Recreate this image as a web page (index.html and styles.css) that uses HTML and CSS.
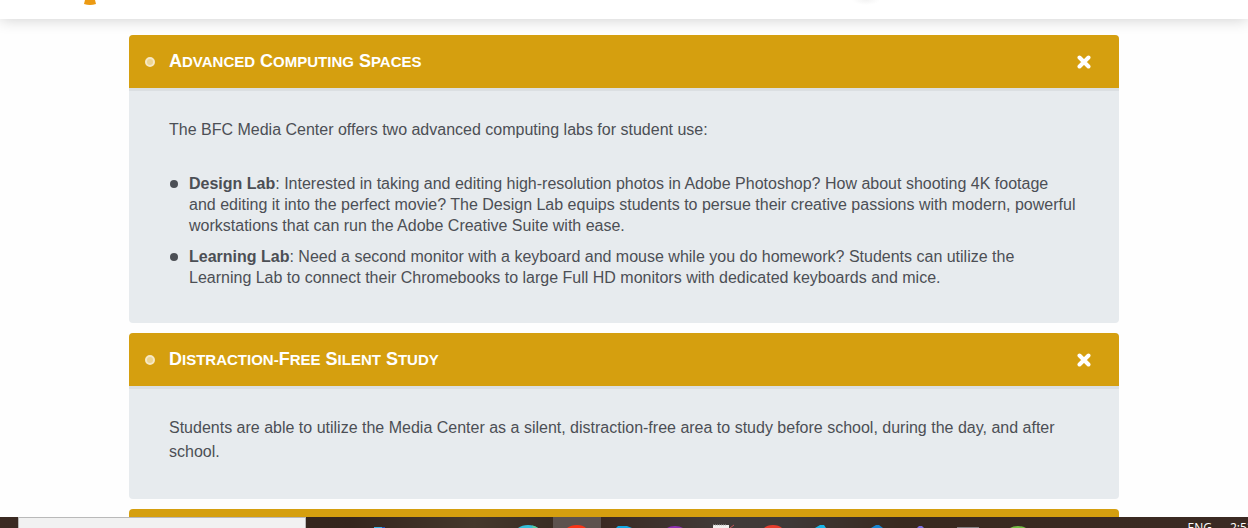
FILE: index.html
```html
<!DOCTYPE html>
<html lang="en">
<head>
<meta charset="utf-8">
<meta name="viewport" content="width=device-width, initial-scale=1">
<title>BFC Media Center</title>
<link rel="stylesheet" href="styles.css">
</head>
<body>
<header class="site-header">
  <svg class="logo" width="12" height="5" viewBox="0 0 12 5" aria-hidden="true"><path d="M1 0H11L12 4Q6 6 0 4Z" fill="#ec9a12"/></svg>
  <span class="header-glow"></span>
</header>

<main class="accordion">
  <section class="panel">
    <h2 class="panel-heading">
      <button class="panel-toggle" type="button" aria-expanded="true" aria-controls="computing">
        <span class="dot"></span>
        <span class="panel-title"><span class="word">Advanced</span> <span class="word">Computing</span> <span class="word">Spaces</span></span>
        <svg class="close" width="14" height="14" viewBox="0 0 14 14" aria-hidden="true"><path d="M2.500 2.500L11.500 11.500M11.500 2.500L2.500 11.500"/></svg>
      </button>
    </h2>
    <div class="panel-body" id="computing">
      <p class="text">The BFC Media Center offers two advanced computing labs for student use:</p>
      <ul class="labs">
        <li class="lab"><strong>Design Lab</strong>: Interested in taking and editing high-resolution photos in Adobe Photoshop? How about shooting 4K footage and editing it into the perfect movie? The Design Lab equips students to persue their creative passions with modern, powerful workstations that can run the Adobe Creative Suite with ease.</li>
        <li class="lab"><strong>Learning Lab</strong>: Need a second monitor with a keyboard and mouse while you do homework? Students can utilize the Learning Lab to connect their Chromebooks to large Full HD monitors with dedicated keyboards and mice.</li>
      </ul>
    </div>
  </section>

  <section class="panel">
    <h2 class="panel-heading">
      <button class="panel-toggle" type="button" aria-expanded="true" aria-controls="study">
        <span class="dot"></span>
        <span class="panel-title"><span class="word">Distraction-</span><span class="word">Free</span> <span class="word">Silent</span> <span class="word">Study</span></span>
        <svg class="close" width="14" height="14" viewBox="0 0 14 14" aria-hidden="true"><path d="M2.500 2.500L11.500 11.500M11.500 2.500L2.500 11.500"/></svg>
      </button>
    </h2>
    <div class="panel-body" id="study">
      <p class="text">Students are able to utilize the Media Center as a silent, distraction-free area to study before school, during the day, and after school.</p>
    </div>
  </section>

  <section class="panel">
    <h2 class="panel-heading">
      <button class="panel-toggle" type="button" aria-label="Next section"></button>
    </h2>
  </section>
</main>

<footer class="taskbar">
  <input class="search" type="text" aria-label="Search">
  <svg class="apps" width="720" height="11" viewBox="306 517 720 11" aria-hidden="true">
    <rect x="553" y="517" width="48" height="11" fill="#5d524e"/>
    <path d="M374 527H382V528H374Z" fill="#39b4e6"/><path d="M382 527H385V528H382Z" fill="#1d4fb8"/>
    <path d="M518 528Q522 525 528 525Q534 525 538 528Z" fill="#35bfd8"/><path d="M532 525.500Q536 526 538 528H533Z" fill="#5ccf9b"/>
    <path d="M567 528Q571 525 577 525Q583 525 586 528Z" fill="#fb3417"/>
    <path d="M616 528L618 526H627L632 528Z" fill="#10a9e6"/>
    <path d="M667 528Q670 526 675 526Q680 526 683 528Z" fill="#8f2fb4"/>
    <path d="M713 525H729V528H713Z" fill="#f0f0ee"/><path d="M713 525H727" stroke="#aaa" stroke-dasharray="1 1"/><path d="M730 528L734 525" stroke="#c3565a"/>
    <path d="M764 528Q767 525 773 525Q779 525 782 528Z" fill="#e63c2d"/>
    <path d="M815 528L820 525H824L826 528Z" fill="#16b5ea"/>
    <path d="M871 528L876 525H879L883 528Z" fill="#1786d2"/>
    <path d="M917 528L919 526H922L924 528Z" fill="#7a6fe0"/>
    <path d="M957 527H979V528H957Z" fill="#858082"/>
    <path d="M1010 528Q1013 526 1018 526Q1023 526 1026 528Z" fill="#75bf45"/>
  </svg>
  <div class="tray"><span>ENG</span><span class="clock">2:52</span></div>
</footer>
</body>
</html>
```
FILE: styles.css
```css
* { box-sizing: border-box; }

html, body { height: 100%; }

body {
  margin: 0;
  overflow: hidden;
  background: #fefefe;
  color: #4c4f55;
  font-family: "Liberation Sans", Arial, sans-serif;
  font-size: 16px;
}

.site-header {
  display: flex;
  align-items: flex-start;
  height: 19px;
  padding-left: 84px;
  background: #fff;
  box-shadow: 0 0 16px rgba(0, 0, 0, .2);
}

.logo { display: block; }

.header-glow {
  width: 28px;
  height: 5px;
  margin-left: 756px;
  background: radial-gradient(ellipse at top, #f3f3f3, #fff 70%);
}

.accordion {
  display: flex;
  flex-direction: column;
  gap: 10px;
  width: calc(100% - 32px);
  max-width: 990px;
  margin: 16px auto 0;
}

.panel {
  flex: none;
  overflow: hidden;
  border-radius: 4px;
  background: #e7ebee;
}

.panel-heading { margin: 0; }

.panel-toggle {
  display: flex;
  align-items: center;
  width: 100%;
  min-height: 53px;
  padding: 0 28px 0 16px;
  border: 0;
  background: #d59f0f;
  color: #fff;
  font: bold 18px/24px "Liberation Sans", Arial, sans-serif;
  text-align: left;
  cursor: pointer;
}

.dot {
  width: 10px;
  height: 10px;
  margin-right: 14px;
  border: 2px solid #f7e8c5;
  border-radius: 50%;
  background: #edd591;
}

.panel-title {
  flex: 1;
  text-transform: uppercase;
}

.word {
  display: inline-block;
  font-size: 15px;
}

.word::first-letter { font-size: 18px; }

.close {
  fill: none;
  stroke: #fff;
  stroke-width: 4;
  stroke-linecap: round;
}

.panel-body {
  padding: 27px 40px 35px;
  border-top: 3px solid #dbdfe2;
}

.text {
  margin: 0;
  line-height: 24px;
}

.labs {
  display: grid;
  gap: 10px;
  margin: 31px 0 0;
  padding: 0;
  list-style: none;
}

.lab {
  position: relative;
  padding-left: 20px;
  line-height: 21px;
}

.lab::before {
  content: "";
  position: absolute;
  top: 7px;
  left: 1px;
  width: 8px;
  height: 8px;
  border-radius: 50%;
  background: #4c4f55;
}

.taskbar {
  position: fixed;
  right: 0;
  bottom: 0;
  left: 0;
  display: flex;
  height: 11px;
  padding-left: 18px;
  overflow: hidden;
  background: linear-gradient(90deg, #3b2a23 0, #34251d 28%, #45382c 38%, #35271f 47%, #3c2b24 49%, #413b39 58%, #3e3938 63%, #39291f 72%, #3b2a23 100%);
}

.search {
  flex: none;
  width: 288px;
  height: 40px;
  padding: 0 12px;
  border: 1px solid #b9b9b9;
  border-radius: 0;
  background: #f1f1f1;
}

.apps { flex: none; }

.tray {
  display: flex;
  flex: none;
  gap: 18px;
  margin-left: auto;
  padding-top: 3px;
  color: #fff;
  font: 12px/16px "Open Sans", "Noto Sans", sans-serif;
}

.clock {
  width: 18px;
  white-space: nowrap;
}
```
